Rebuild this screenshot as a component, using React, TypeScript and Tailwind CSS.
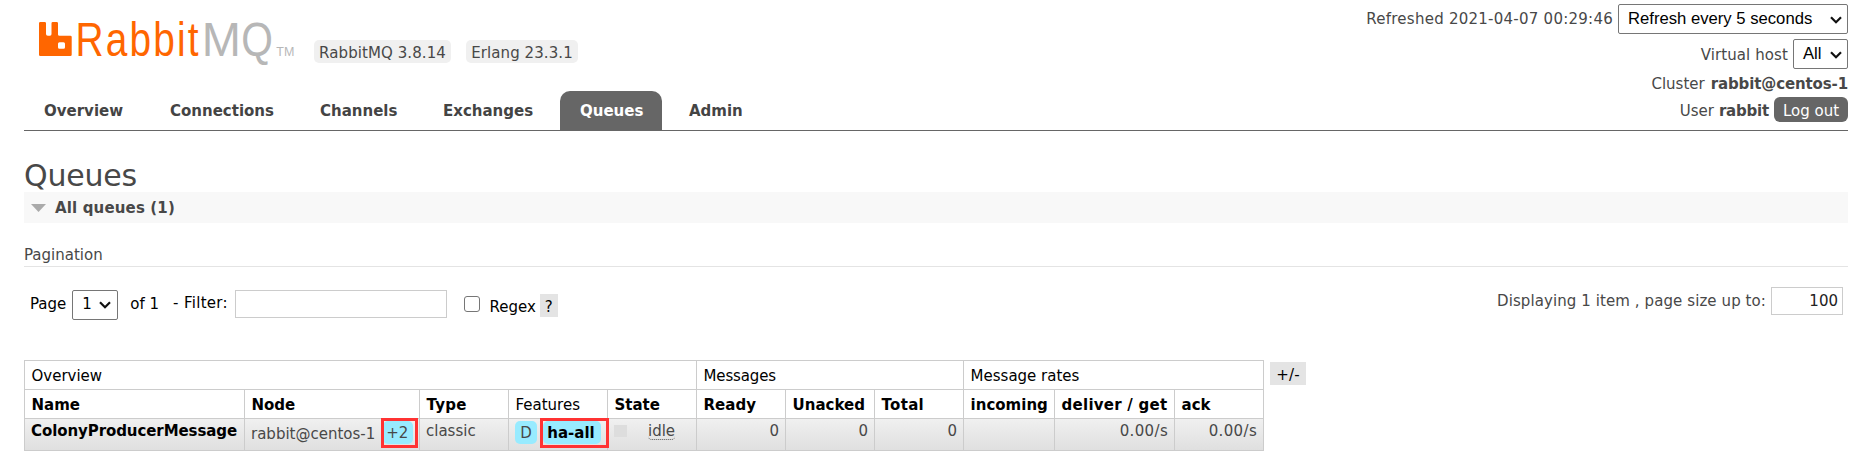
import type { ReactNode } from "react";

const tabs = [
  { label: "Overview", item: "w-[126px]" },
  { label: "Connections", item: "w-[150px]" },
  { label: "Channels", item: "w-[123px]" },
  { label: "Exchanges", item: "w-[137px]" },
  { label: "Queues", item: "w-[109px]", active: true },
  { label: "Admin", item: "" },
];

function Chevron({ className }: { className: string }) {
  return (
    <svg className={className} width="12" height="8" viewBox="0 0 12 8" fill="none" stroke="#111" strokeWidth="2.2">
      <path d="M1 1.2 L6 6.2 L11 1.2" />
    </svg>
  );
}

function SelectBox({ children, className }: { children: ReactNode; className: string }) {
  return (
    <div className={`flex items-center justify-between rounded-[2px] border border-[#767676] bg-white text-black ${className}`}>
      {children}
    </div>
  );
}

function Logo() {
  return (
    <svg className="mt-[8px] ml-[15px] shrink-0" width="260" height="64" viewBox="0 0 260 64" fontFamily="'Liberation Sans', sans-serif">
      <path
        transform="translate(0 8)"
        fill="#f60"
        fillRule="evenodd"
        d="M1.3 6 H5.7 Q7 6 7 7.3 V18 Q7 19.8 8.8 19.8 H11 Q12.5 19.8 12.5 18 V7.3 Q12.5 6 13.8 6 H17.7 Q19 6 19 7.3 V18.4 Q19 19.8 20.5 19.8 H31.4 Q32.7 19.8 32.7 21.1 V38.7 Q32.7 40 31.4 40 H1.3 Q0 40 0 38.7 V7.3 Q0 6 1.3 6 Z M20.5 26.3 Q19 26.3 19 27.8 V31.2 Q19 32.7 20.5 32.7 H24.5 Q26 32.7 26 31.2 V27.8 Q26 26.3 24.5 26.3 Z"
      />
      <text transform="translate(36.6 48) scale(.8 1)" fontSize="48.5" letterSpacing="2.7" fill="#f60">
        Rabbit
      </text>
      <text transform="translate(162.8 48) scale(.97 1)" fontSize="48.5" fill="#b7b7b7">
        M
      </text>
      <text transform="translate(202.2 48) scale(.84 1)" fontSize="48.5" fill="#b7b7b7">
        Q
      </text>
      <text x="237.3" y="48" fontSize="12.5" fill="#b7b7b7">
        TM
      </text>
    </svg>
  );
}

function Version({ children, className }: { children: ReactNode; className: string }) {
  return <span className={`flex h-[23px] items-center justify-center rounded-[5px] bg-[#f0f0f0] pt-[2px] tracking-[0.08px] ${className}`}>{children}</span>;
}

const group = "border border-[#ccc] pr-[6px] pl-[6.5px] pt-[2px] text-left font-normal text-black";
const head = "border border-[#ccc] pr-0 pl-[6.5px] pt-[2px] text-left text-black";
const cell = "border border-[#ccc] px-[6px] pt-[2px] align-top";

export default function App() {
  return (
    <div className="h-[470px] w-[1862px] overflow-hidden whitespace-nowrap bg-white font-['DejaVu_Sans',sans-serif] text-[15px] leading-[20px] text-[#484848]">
      <header className="mr-[14px] ml-[24px] flex h-[131px] justify-between border-b border-[#666]">
        <div className="flex flex-col justify-between">
          <div className="flex h-[80px]">
            <Logo />
            <div className="mt-[40px] ml-[15px] flex gap-[15px]">
              <Version className="w-[137px]">RabbitMQ 3.8.14</Version>
              <Version className="w-[112px]">Erlang 23.3.1</Version>
            </div>
          </div>
          <nav className="flex h-[39px] font-bold">
            {tabs.map((t) => (
              <div key={t.label} className={t.item}>
                <a className={`inline-flex h-[39px] items-center pl-[20px] ${t.active ? "w-[102px] rounded-t-[10px] bg-[#666] text-white" : "text-[#444]"}`}>
                  {t.label}
                </a>
              </div>
            ))}
          </nav>
        </div>
        <div className="flex flex-col items-end pt-[4px]">
          <div className="flex h-[30px] items-center gap-[5px]">
            <span className="tracking-[0.25px]">Refreshed 2021-04-07 00:29:46</span>
            <SelectBox className="h-[30px] w-[230px] pr-[5px] pl-[9px] font-['Liberation_Sans',sans-serif] text-[16.67px]">
              <span className="pb-px">Refresh every 5 seconds</span>
              <Chevron className="mt-px" />
            </SelectBox>
          </div>
          <div className="mt-[5px] flex h-[30px] items-center gap-[5px]">
            <span className="pt-[2px] tracking-[0.1px]">Virtual host</span>
            <SelectBox className="h-[30px] w-[55px] pr-[5px] pl-[9px] font-['Liberation_Sans',sans-serif] text-[16.67px]">
              <span className="pb-px">All</span>
              <Chevron className="mt-px" />
            </SelectBox>
          </div>
          <div className="mt-[5px] flex gap-[6px]">
            <span>Cluster</span>
            <b className="tracking-[-0.12px]">rabbit@centos-1</b>
          </div>
          <div className="mt-[3px] flex h-[25px] items-center gap-[5px]">
            <span className="pt-[2px]">User</span>
            <b className="pt-[2px] tracking-[-0.2px]">rabbit</b>
            <button className="h-[25px] w-[74px] rounded-[6px] bg-[#666] pt-[2px] text-white">Log out</button>
          </div>
        </div>
      </header>

      <main className="mr-[14px] ml-[24px]">
        <h1 className="mt-[26px] h-[35px] text-[30px] leading-[37px] tracking-[-0.2px]">Queues</h1>
        <h2 className="flex h-[31px] items-center bg-[#f8f8f8] font-bold tracking-[0.15px]">
          <svg className="mr-[9px] ml-[7px]" width="15" height="8" viewBox="0 0 15 8">
            <path d="M0 0 H15 L7.5 8 Z" fill="#aaa" />
          </svg>
          All queues (1)
        </h2>
        <h3 className="mt-[22px] h-[22px] border-b border-[#e4e4e4] leading-[20px]">Pagination</h3>

        <div className="flex justify-between">
          <div className="mt-[22px] flex h-[31px] items-center pl-[6px] text-black">
            <span className="pb-px">Page</span>
            <SelectBox className="ml-[6px] h-[30px] w-[46px] pr-[6px] pl-[9px]">
              <span className="pb-px">1</span>
              <Chevron className="mt-px" />
            </SelectBox>
            <span className="ml-[12px] pb-px">of 1</span>
            <span className="ml-[14px] pb-[3px] tracking-[0.3px]">- Filter:</span>
            <input className="mb-px ml-[7.5px] h-[28px] w-[212px] border border-[#ccc] bg-white" />
            <span className="mb-[2px] ml-[17px] h-[16px] w-[16px] rounded-[3px] border border-[#767676]" />
            <span className="ml-[9px] pt-[5px]">Regex</span>
            <span className="mt-[2px] ml-[4px] flex h-[23px] w-[18px] items-center justify-center bg-[#e4e4e4] pt-[2px]">?</span>
          </div>
          <div className="mt-[20px] mr-[5px] flex h-[28px] items-center gap-[5px]">
            <span className="pb-px tracking-[0.09px]">Displaying 1 item , page size up to:</span>
            <span className="flex h-[28px] w-[72px] items-center justify-end border border-[#ccc] pr-[4px] pb-px text-[#222]">100</span>
          </div>
        </div>

        <div className="mt-[40px] flex items-start">
          <table className="h-[91px] w-[1240px] table-fixed border-collapse">
            <colgroup>
              <col className="w-[220px]" />
              <col className="w-[175px]" />
              <col className="w-[89px]" />
              <col className="w-[99px]" />
              <col className="w-[89px]" />
              <col className="w-[89px]" />
              <col className="w-[89px]" />
              <col className="w-[89px]" />
              <col className="w-[91px]" />
              <col className="w-[120px]" />
              <col className="w-[89px]" />
            </colgroup>
            <thead>
              <tr className="h-[29px]">
                <th colSpan={5} className={group}>Overview</th>
                <th colSpan={3} className={group}><span className="tracking-[-0.15px]">Messages</span></th>
                <th colSpan={3} className={group}>Message rates</th>
              </tr>
              <tr className="h-[29px]">
                <th className={head}>Name</th>
                <th className={head}>Node</th>
                <th className={head}><span className="tracking-[0.3px]">Type</span></th>
                <th className={head}><span className="font-normal">Features</span></th>
                <th className={head}>State</th>
                <th className={head}>Ready</th>
                <th className={head}>Unacked</th>
                <th className={head}><span className="tracking-[0.3px]">Total</span></th>
                <th className={head}>incoming</th>
                <th className={head}><span className="tracking-[0.25px]">deliver / get</span></th>
                <th className={head}>ack</th>
              </tr>
            </thead>
            <tbody>
              <tr className="h-[32px] bg-linear-to-b from-[#f0f0f0] to-[#dfdfdf]">
                <td className={`${cell} font-bold text-black`}><span className="tracking-[-0.08px]">ColonyProducerMessage</span></td>
                <td className="border border-[#ccc] p-0 align-top">
                  <div className="flex h-[29px] pl-[6px]">
                    <span className="pt-[5px]">rabbit@centos-1</span>
                    <span className="relative mt-[2px] ml-[8px] flex h-[23px] w-[30px] items-center justify-center rounded-[5px] bg-[#98ebff] pr-[2px]">
                      +2
                      <span className="absolute top-[-3px] left-[-2px] h-[30px] w-[37px] border-3 border-[#f33]" />
                    </span>
                  </div>
                </td>
                <td className={cell}>classic</td>
                <td className="border border-[#ccc] p-0 align-top">
                  <div className="flex h-[29px] gap-[6px] pt-[2px] pl-[6px]">
                    <span className="flex h-[23px] w-[22px] items-center justify-center rounded-[5px] bg-[#98ebff] pt-px">D</span>
                    <span className="relative flex h-[23px] w-[58px] items-center justify-center rounded-[5px] bg-[#98ebff] pr-[2px] font-bold text-black">
                      ha-all
                      <span className="absolute top-[-3px] left-[-3px] h-[30px] w-[69px] border-3 border-[#f33]" />
                    </span>
                  </div>
                </td>
                <td className={cell}>
                  <div className="flex">
                    <span className="mt-[4px] h-[12px] w-[13px] bg-[#ddd]" />
                    <span className="ml-[21px] h-[19px] rounded-[4px] border-b border-dotted border-[#555]">idle</span>
                  </div>
                </td>
                <td className={`${cell} text-right`}>0</td>
                <td className={`${cell} text-right`}>0</td>
                <td className={`${cell} text-right`}>0</td>
                <td className={cell} />
                <td className={`${cell} text-right`}><span className="tracking-[0.35px]">0.00/s</span></td>
                <td className={`${cell} text-right`}><span className="tracking-[0.35px]">0.00/s</span></td>
              </tr>
            </tbody>
          </table>
          <button className="mt-[2px] ml-[6px] h-[23px] w-[36px] bg-[#e4e4e4] pt-[2px] tracking-[0.3px] text-black">+/-</button>
        </div>
      </main>
    </div>
  );
}
